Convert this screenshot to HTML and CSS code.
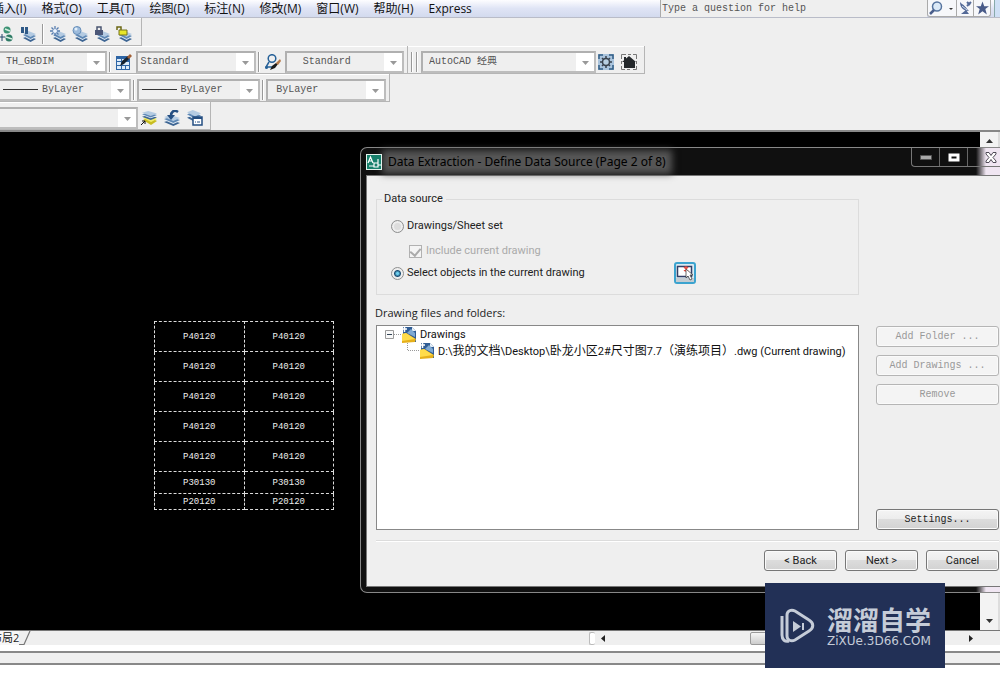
FILE: index.html
```html
<!DOCTYPE html>
<html lang="zh-CN">
<head>
<meta charset="utf-8">
<title>AutoCAD - Data Extraction</title>
<link rel="stylesheet" href="styles.css">
</head>
<body>
<svg class="defs" aria-hidden="true">
  <defs>
    <symbol id="layers" viewBox="0 0 12 11" preserveAspectRatio="none">
      <path d="M0 7l5-2 7 3-5 3z" fill="#3d6593"/><path d="M0 5l5-2 7 3-5 3z" fill="#e4edf6"/><path d="M0 4l5-2 7 3-5 3z" fill="#5e88b5"/><path d="M0 2l5-2 7 3-5 3z" fill="#b4cbe2"/>
    </symbol>
    <symbol id="arrow" viewBox="0 0 7 4"><path d="M0 0h7L3.500 4z" fill="#999"/></symbol>
    <symbol id="dwg" viewBox="0 0 16 16">
      <path d="M2 0h9l4 4v11H2z" fill="#2f5c94"/><path d="M11 0v4h4z" fill="#e7eff7"/><path d="M1 2h5M3.500 0v5" stroke="#fff" stroke-width="1.500"/><path d="M6 6l4-4 4 4v4z" fill="#7fa9d2"/><path d="M1 7l4-1 10 6-1 3-13 1z" fill="#e6b01a"/><path d="M1 7l4-1 9 6-13 2z" fill="#ffdc4a"/>
    </symbol>
  </defs>
</svg>
<div class="app">
  <header class="menubar">
    <nav class="menus">
      <button>插入(I)</button><button>格式(O)</button><button>工具(T)</button><button>绘图(D)</button><button>标注(N)</button><button>修改(M)</button><button>窗口(W)</button><button>帮助(H)</button><button>Express</button>
    </nav>
    <input class="help" type="text" placeholder="Type a question for help" aria-label="Type a question for help">
    <div class="infobar">
      <button class="search" aria-label="Search"><svg width="26" height="15" viewBox="0 0 26 15"><circle cx="8" cy="5.500" r="4.500" fill="#dbe9f7" stroke="#56749f" stroke-width="1.500"/><path d="M5 9l-4 4" stroke="#4a5e8c" stroke-width="2.500"/><path d="M20 7h4l-2 2z" fill="#333"/></svg></button>
      <button aria-label="Communication"><svg width="14" height="15" viewBox="0 0 14 15"><path d="M2 1c0 6 4 9 9 9zM3 13h8l-3-4z" fill="#536997"/><path d="M4 4l4 4M9 1l3 3M9 5l4-4" stroke="#536997" stroke-width="2"/><path d="M4 5l5 4" stroke="#cddbee"/></svg></button>
      <button aria-label="Favorites"><svg width="13" height="14" viewBox="0 0 12 12"><path d="M6 0l1.600 4.300H12L8.600 7l1.400 5-4-3-4 3 1.400-5L0 4.300h4.400z" fill="#485a88"/></svg></button>
    </div>
    <span class="edge"></span>
  </header>

  <section class="toolbars">
    <div class="row"><div class="bar layer-tools">
      <button aria-label="Layer match"><svg width="16" height="16" viewBox="0 0 16 16"><circle cx="9" cy="4" r="3.500" fill="#3c9274"/><circle cx="11" cy="12" r="3.500" fill="#2f7b66"/><path d="M7 3l5 2M8 11l6 2" stroke="#d5eee0" stroke-width="1.500"/><path d="M0 11h7M4 8v7" stroke="#24496b"/></svg></button>
      <button aria-label="Layer isolate"><svg width="16" height="16" viewBox="0 0 16 16"><use href="#layers" x="3" y="5" width="13" height="11"/><path d="M1 1h3v6H1zM5 1h3v7H5z" fill="#2e5987"/></svg></button>
      <i class="sep"></i>
      <button aria-label="Layer freeze"><svg width="16" height="16" viewBox="0 0 16 16"><use href="#layers" x="3" y="5" width="13" height="11"/><path d="M5 0v10M0 5h10M1.500 1.500l7 7M8.500 1.500l-7 7" stroke="#577daf" stroke-width="1.300"/><circle cx="5" cy="5" r="2" fill="#eef5ff"/></svg></button>
      <button aria-label="Layer off"><svg width="16" height="16" viewBox="0 0 16 16"><use href="#layers" x="3" y="5" width="13" height="11"/><circle cx="5" cy="4.500" r="4" fill="#9cbbdc" stroke="#668eb9"/><circle cx="4" cy="3" r="1.500" fill="#e3effa"/></svg></button>
      <button aria-label="Layer lock"><svg width="16" height="16" viewBox="0 0 16 16"><use href="#layers" x="3" y="5" width="13" height="11"/><path d="M3 5V1h4v4" fill="none" stroke="#4a5572" stroke-width="1.500"/><path d="M1 4h8v5H1z" fill="#4b5778"/></svg></button>
      <button aria-label="Layer unlock"><svg width="16" height="16" viewBox="0 0 16 16"><use href="#layers" x="3" y="5" width="13" height="11"/><path d="M1 4V1h4v4" fill="none" stroke="#6b6713" stroke-width="1.500"/><path d="M3 4h8v5H3z" fill="#e7e629" stroke="#77751d"/></svg></button>
    </div></div>

    <div class="row"><div class="bar styles-bar">
      <div class="combo w-dim"><select aria-label="Dimension style"><option>TH_GBDIM</option></select><svg width="18" height="18"><use href="#arrow" x="6" y="8" width="7" height="4"/></svg></div>
      <i class="sep"></i>
      <button aria-label="Table style"><svg width="16" height="16" viewBox="0 0 16 16"><path d="M0 2h14v14H0z" fill="#2e65a5"/><path d="M1 5h4v2H1zm5 0h4v2H6zM1 8h4v3H1zm5 0h7v3H6zM1 12h4v3H1zm5 0h3v3H6zm4 0h3v3h-3z" fill="#ddecfa"/><path d="M4 12l2-5 6-5 1 3-5 5z" fill="#17232f"/><path d="M11 3l3-3 2 2-3 3z" fill="#a15f35"/></svg></button>
      <div class="combo w-std"><select aria-label="Table style name"><option>Standard</option></select><svg width="18" height="18"><use href="#arrow" x="6" y="8" width="7" height="4"/></svg></div>
      <i class="sep"></i>
      <button aria-label="Multileader style"><svg width="16" height="16" viewBox="0 0 16 16"><circle cx="7" cy="4.500" r="3.800" fill="none" stroke="#266198" stroke-width="1.500"/><path d="M4 8l-3 5h6" fill="none" stroke="#266198" stroke-width="1.500"/><circle cx="1.500" cy="13.500" r="1.500" fill="#266198"/><path d="M5 16l2-4 4-3 2 1-3 4z" fill="#1a1a1a"/><path d="M11 9l4-4 1 2-3 4z" fill="#b77a49"/></svg></button>
      <div class="combo w-std indent"><select aria-label="Multileader style name"><option>Standard</option></select><svg width="18" height="18"><use href="#arrow" x="6" y="8" width="7" height="4"/></svg></div>
    </div><div class="bar workspace-bar">
      <i class="sep"></i><i class="sep"></i>
      <div class="combo w-space"><select aria-label="Workspace"><option>AutoCAD 经典</option></select><svg width="18" height="18"><use href="#arrow" x="6" y="8" width="7" height="4"/></svg></div>
      <button aria-label="Workspace settings"><svg width="16" height="16" viewBox="0 0 16 16"><path d="M0 0h16v16H0z" fill="#aac4dd"/><path d="M1 5V1h4M11 1h4v4M15 11v4h-4M5 15H1v-4" fill="none" stroke="#315c84" stroke-width="1.500"/><path d="M8 2v12M2 8h12M4 4l8 8M12 4l-8 8" stroke="#38414c" stroke-width="1.500"/><circle cx="8" cy="8" r="3.500" fill="#b8cfe1" stroke="#38414c" stroke-width="1.500"/></svg></button>
      <button class="home" aria-label="My workspace"><svg width="16" height="16" viewBox="0 0 16 16"><path d="M.5 5V.5H5M7 .5h3M12 .5h3.500V5M15.500 7v3M15.500 12v3.500H12M9 15.500H6M4 15.500H.5V12M.5 10V7" fill="none" stroke="#777"/><path d="M3 14V8H1l7-6 7 6h-1v6z" fill="#24282b"/><path d="M3 3h2v4H3z" fill="#24282b"/></svg></button>
    </div></div>

    <div class="row"><div class="bar props-bar">
      <div class="combo w-ltype"><span class="line"></span><select aria-label="Linetype"><option>ByLayer</option></select><svg width="18" height="18"><use href="#arrow" x="6" y="8" width="7" height="4"/></svg></div>
      <i class="sep"></i>
      <div class="combo w-lweight"><span class="line"></span><select aria-label="Lineweight"><option>ByLayer</option></select><svg width="18" height="18"><use href="#arrow" x="6" y="8" width="7" height="4"/></svg></div>
      <i class="sep"></i>
      <div class="combo w-plot"><select aria-label="Plot style"><option>ByLayer</option></select><svg width="18" height="18"><use href="#arrow" x="6" y="8" width="7" height="4"/></svg></div>
    </div></div>

    <div class="row"><div class="bar layers-bar">
      <div class="combo w-layer"><select aria-label="Layer"><option></option></select><svg width="18" height="18"><use href="#arrow" x="6" y="8" width="7" height="4"/></svg></div>
      <button aria-label="Make layer current"><svg width="16" height="16" viewBox="0 0 16 16"><path d="M2 10l6-3 8 4-6 4z" fill="#c8bd22"/><path d="M2 8l6-3 8 4-6 3z" fill="#f0ec69"/><use href="#layers" x="1" y="1" width="15" height="9"/><path d="M0 15l4-4M1 11h3v3" fill="none" stroke="#111"/></svg></button>
      <button aria-label="Layer previous"><svg width="16" height="16" viewBox="0 0 16 16"><use href="#layers" x="0" y="5" width="16" height="11"/><path d="M14 2C10-1 7 2 7 6" fill="none" stroke="#254f82" stroke-width="2.500"/><path d="M3 5h8l-4 5z" fill="#254f82"/></svg></button>
      <button aria-label="Layer states"><svg width="16" height="16" viewBox="0 0 16 16"><use href="#layers" x="0" y="0" width="14" height="12"/><path d="M6 7h9v8H6z" fill="#fff" stroke="#254f82" stroke-width="1.500"/><path d="M6 7h9v2H6z" fill="#254f82"/><path d="M8 12h1m1 0h3" stroke="#254f82"/></svg></button>
    </div></div>
  </section>

  <main class="workspace">
    <div class="canvas">
      <table class="schedule">
        <tr><td>P40120</td><td>P40120</td></tr>
        <tr><td>P40120</td><td>P40120</td></tr>
        <tr><td>P40120</td><td>P40120</td></tr>
        <tr><td>P40120</td><td>P40120</td></tr>
        <tr><td>P40120</td><td>P40120</td></tr>
        <tr class="mid"><td>P30130</td><td>P30130</td></tr>
        <tr class="low"><td>P20120</td><td>P20120</td></tr>
      </table>
    </div>
    <div class="vscroll">
      <button aria-label="Scroll up"><svg width="7" height="4"><path d="M0 4h7L3.500 0z" fill="#333"/></svg></button>
      <button aria-label="Scroll down"><svg width="7" height="4"><path d="M0 0h7L3.500 4z" fill="#333"/></svg></button>
    </div>
  </main>

  <footer class="bottom">
    <div class="tabs">
      <button class="tab">布局2</button>
      <svg class="slant" width="12" height="14" viewBox="0 0 12 14"><path d="M11 0L5 13.500H0" fill="none" stroke="#777" stroke-width="1.200"/></svg>
      <div class="hscroll">
        <i class="splitter"></i>
        <button aria-label="Scroll left"><svg width="4" height="7"><path d="M4 0v7L0 3.500z" fill="#222"/></svg></button>
        <i class="thumb"></i>
        <button aria-label="Scroll right"><svg width="4" height="7"><path d="M0 0v7l4-3.500z" fill="#222"/></svg></button>
      </div>
    </div>
    <div class="command"></div>
  </footer>

  <section class="dialog" role="dialog" aria-labelledby="dlg-title">
    <div class="titlebar">
      <svg width="16" height="16" viewBox="0 0 16 16"><path d="M0 0h16v16H0z" fill="#e3f2ec"/><path d="M1 1h14v14H1z" fill="#18806c"/><path d="M2 9l2.500-6L7 9M3 7h3M8 9h4v4H8zM12 5v6h3M3 12h5" fill="none" stroke="#fff" stroke-width="1.200"/></svg>
      <h1 id="dlg-title">Data Extraction - Define Data Source (Page 2 of 8)</h1>
      <div class="winctl">
        <button aria-label="Minimize"><svg width="12" height="5"><path d="M.5 .5h11v4H.5z" fill="#aaa" stroke="#555"/></svg></button>
        <button aria-label="Maximize"><svg width="12" height="9"><path d="M2 2h8v5H2z" fill="none" stroke="#fff" stroke-width="3"/></svg></button>
        <button class="close" aria-label="Close"><svg width="12" height="11" viewBox="0 0 12 11"><path d="M1 .5h3l2 3 2-3h3v1.500L8 5.500 11 9v1.500H8l-2-3-2 3H1V9l3-3.500L1 2z" fill="#fff" stroke="#4f4a56"/></svg></button>
      </div>
    </div>
    <form class="body">
      <div class="columns">
        <div class="left">
          <fieldset>
            <legend>Data source</legend>
            <div class="opt"><input type="radio" name="src" id="r1"><label for="r1">Drawings/Sheet set</label></div>
            <div class="opt sub"><input type="checkbox" id="c1" checked disabled><label for="c1">Include current drawing</label></div>
            <div class="opt last"><input type="radio" name="src" id="r2" checked><label for="r2">Select objects in the current drawing</label>
              <button type="button" class="pick" aria-label="Select objects"><svg width="18" height="18" viewBox="0 0 18 18"><path d="M0 14h18v4H0z" fill="#c4ccd2"/><path d="M1.500 2.500h14v10h-14z" fill="#fff" stroke="#333f66" stroke-width="1.500"/><path d="M8 3l4 4M12 3l-4 4M10 2v6" stroke="#e64a3d" stroke-width="1.200"/><path d="M10 5v9l2-2 2 4 2-1-2-4h3z" fill="#fff" stroke="#444" stroke-width=".8"/></svg></button></div>
          </fieldset>
          <h2>Drawing files and folders:</h2>
          <div class="tree">
            <div class="node"><svg width="16" height="16" viewBox="0 0 16 16"><path d="M.5 3.500h8v8h-8z" fill="#f8f8f8" stroke="#999"/><path d="M2 7.500h5" stroke="#345"/><path d="M9 7.500h7" stroke="#999" stroke-dasharray="1 1"/></svg><svg width="16" height="16"><use href="#dwg"/></svg><span>Drawings</span></div>
            <div class="node child"><svg width="12" height="16" viewBox="0 0 12 16"><path d="M.5 0v7.500H12" fill="none" stroke="#999" stroke-dasharray="1 1"/></svg><svg width="16" height="16"><use href="#dwg"/></svg><span>D:\<span class="han">我的文档</span>\Desktop\<span class="han">卧龙小区</span>2#<span class="han">尺寸图</span>7.7<span class="han">（演练项目）</span>.dwg (Current drawing)</span></div>
          </div>
        </div>
        <div class="side">
          <button type="button" class="btn mono" disabled>Add Folder ...</button>
          <button type="button" class="btn mono" disabled>Add Drawings ...</button>
          <button type="button" class="btn mono" disabled>Remove</button>
          <button type="button" class="btn mono settings">Settings...</button>
        </div>
      </div>
      <div class="actions">
        <button type="button" class="btn">&lt; Back</button>
        <button type="button" class="btn">Next &gt;</button>
        <button type="button" class="btn">Cancel</button>
      </div>
    </form>
  </section>

  <aside class="brand">
    <svg width="36" height="38" viewBox="0 0 36 38"><path d="M3 9v19c0 5 3 7 7 6" fill="none" stroke="#c5ccd8" stroke-width="3"/><path d="M8 8c0-4 4-6 8-4l14 9c5 3 5 8 0 11l-14 9c-4 2-8 0-8-4z" fill="none" stroke="#c5ccd8" stroke-width="3"/><path d="M14 14v11l8-5.500z" fill="#c5ccd8"/><path d="M24 16v7" stroke="#c5ccd8" stroke-width="2"/></svg>
    <div><strong>溜溜自学</strong><span>ZiXUe.3D66.COM</span></div>
  </aside>
</div>
</body>
</html>
```
FILE: styles.css
```css
* { box-sizing: border-box; }
body { margin: 0; font: 11px/16px "Open Sans", "Noto Sans CJK SC", sans-serif; color: #222; background: #fff; }
button, input, select { font: inherit; color: inherit; margin: 0; padding: 0; border: 0; background: none; }
button { display: flex; align-items: center; justify-content: center; flex: none; }
svg { display: block; flex: none; }
.defs { position: absolute; width: 0; height: 0; }
.app { position: relative; display: flex; flex-direction: column; min-height: 100vh; overflow: hidden; }

.menubar { display: flex; height: 18px; background: linear-gradient(#fdfdff, #dfe4f5 50%, #d3daee); border-bottom: 1px solid #b9bcc8; }
.menus { display: flex; flex: 1; gap: 15px; margin-left: -8px; font-size: 12px; color: #111; }
.menus button { white-space: nowrap; }
.help { width: 267px; padding-left: 1px; border-left: 1px solid #aaa; background: #efefef; font: 10px "Liberation Mono", monospace; }
.help::placeholder { color: #555; opacity: 1; }
.infobar { display: flex; border: 1px solid #aaa; border-top: 0; border-radius: 0 0 3px 3px; background: #f6f7fa; }
.infobar button { width: 17px; }
.infobar .search { width: 28px; }
.infobar button + button { border-left: 1px solid #aaa; }
.edge { width: 6px; margin-left: 3px; border-left: 1px solid #8aa; background: #cfe0f5; }

.toolbars { background: #efefef; border-bottom: 2px solid #888; }
.row { display: flex; height: 28px; }
.bar { display: flex; align-items: center; border: 1px solid #b5b5b5; border-width: 0 1px 1px 0; box-shadow: inset 0 1px #fff; padding: 4px 3px 0 0; }
.sep { flex: none; width: 2px; height: 20px; border-left: 1px solid #999; background: #fff; }
.combo { display: flex; height: 22px; border: 2px solid #bbb; border-color: #b0b0b0 #bdbdbd #bdbdbd #b0b0b0; background: #efefef; color: #555; font: 10px "Liberation Mono", "Noto Sans CJK SC", monospace; align-items: center; }
.combo select { flex: 1; min-width: 0; height: 18px; padding-left: 2px; appearance: none; }
.combo svg { background: #fff; }
.combo .line { flex: none; width: 35px; margin: 0 2px 0 3px; border-top: 1px solid #333; }
.layer-tools { gap: 6px; width: 142px; }
.layer-tools button { width: 16px; }
.layer-tools button:first-child { margin-left: -2px; }
.styles-bar { width: 408px; }
.styles-bar .sep { margin: 0 5px 0 2px; }
.styles-bar button { margin-right: 4px; }
.w-dim { width: 108px; border-left: 0; }
.w-dim select { padding-left: 6px; }
.w-std { width: 120px; }
.indent select { padding-left: 16px; }
.workspace-bar { width: 237px; }
.workspace-bar .sep { margin-left: 3px; }
.workspace-bar .combo { margin: 0 2px 0 3px; }
.workspace-bar .home { margin-left: 7px; }
.w-space { width: 175px; }
.w-space select { padding-left: 6px; }
.props-bar { width: 390px; }
.props-bar .sep { margin: 0 2px; }
.w-ltype { width: 132px; border-left: 0; }
.w-lweight { width: 125px; }
.w-plot { width: 121px; }
.w-plot select { padding-left: 8px; }
.layers-bar { width: 211px; gap: 7px; }
.w-layer { width: 138px; border-left: 0; margin-right: -4px; }

.workspace { display: flex; flex: 1; background: #000; }
.canvas { flex: 1; padding: 189px 0 0 154px; }
.schedule { width: 180px; border-collapse: collapse; table-layout: fixed; color: #eee; font: 9px/12px "Liberation Mono", monospace; text-align: center; }
.schedule td { height: 30px; padding: 0; border: 1px dashed #ddd; }
.schedule .mid td { height: 22px; }
.schedule .low td { height: 16px; }
.vscroll { display: flex; flex-direction: column; justify-content: space-between; width: 20px; border-right: 2px solid #ddd; background: #f3f3f3; }
.vscroll button { height: 18px; }

.bottom { background: #fff; padding-bottom: 21px; }
.tabs { display: flex; height: 17px; background: #efefef; border-top: 1px solid #777; border-bottom: 2px solid #fff; }
.tab { margin-left: -9px; background: #f7f7f7; }
.hscroll { display: flex; align-items: center; width: 411px; margin-left: auto; padding-right: 27px; }
.hscroll .splitter { width: 6px; height: 13px; border: 1px solid #bbb; border-right: 0; border-radius: 2px; background: #fff; margin-right: 6px; }
.hscroll .thumb { width: 100px; height: 13px; margin: 0 auto 0 145px; border: 1px solid #999; border-radius: 2px; background: linear-gradient(#f5f5f5, #ccc); }
.command { height: 14px; border: 2px solid #888; border-width: 2px 0; margin-top: 4px; background: #efefef; }

.dialog { position: absolute; left: 360px; right: 0; top: 147px; padding: 0 0 5px 5px; border: 1px solid #888; border-right: 0; border-radius: 7px 0 0 7px; background: linear-gradient(90deg, #101010 0 615px, #f0e6f2 625px); color: #222; font-family: Roboto, "Noto Sans CJK SC", sans-serif; }
.titlebar { display: flex; align-items: center; height: 27px; gap: 6px; }
.titlebar h1 { margin: 0; font: 12px/12px "Noto Sans", sans-serif; color: #000; background: #555; box-shadow: 0 0 7px 6px #555; white-space: nowrap; }
.titlebar > svg { z-index: 1; }
.winctl { display: flex; align-self: flex-start; height: 19px; margin-left: auto; border: 1px solid #777; border-width: 0 0 1px 1px; border-radius: 0 0 0 4px; }
.winctl button { width: 28px; border-right: 1px solid #666; }
.winctl .close { width: 32px; padding-left: 13px; border: 0; }
.body { padding: 16px 1px 15px 9px; border: 1px solid #777; border-right: 0; background: #efefef; }
.columns { display: flex; gap: 17px; }
.left { flex: 1; min-width: 0; }
fieldset { height: 103px; margin: 0; padding: 12px 0 0 14px; border: 1px solid #dcdcdc; }
legend { margin-left: -9px; padding: 0 3px 0 2px; line-height: 14px; }
.opt { display: flex; align-items: center; height: 16px; gap: 3px; margin-bottom: 9px; }
.opt input { appearance: none; width: 13px; height: 13px; border: 1px solid #8e8f8f; background: #f4f4f4; }
.opt input[type="radio"] { border-radius: 50%; box-shadow: inset 0 0 0 2px #eee; background: #ddd; }
.opt input[type="radio"]:checked { background: radial-gradient(circle, #6fd0ef 0 1px, #174a70 3px, #eee 5px); }
.opt input[type="checkbox"] { display: grid; place-items: center; border-color: #b1b1b1; }
.opt input[type="checkbox"]::before { content: ""; width: 5px; height: 8px; margin-bottom: 2px; border: solid #aaa; border-width: 0 2px 2px 0; transform: rotate(40deg); }
.sub { margin-left: 18px; margin-bottom: 6px; color: #aaa; }
.sub label { padding-left: 1px; }
.pick { width: 22px; height: 22px; margin-left: auto; margin-right: 162px; border: 2px solid #3ba3cf; border-radius: 3px; background: #dcebf3; }
h2 { margin: 10px 0 4px -1px; font: 11px/16px "Open Sans", sans-serif; }
.tree { height: 205px; padding: 1px 0 0 8px; border: 1px solid #888; background: #fff; }
.node { display: flex; height: 16px; align-items: center; gap: 3px; white-space: nowrap; color: #111; }
.node svg:first-child { margin-right: -3px; }
.child { padding-left: 22px; }
.han { font-size: 12px; }
.side { display: flex; flex-direction: column; gap: 8px; width: 123px; padding-top: 134px; }
.btn { height: 21px; border: 1px solid #777; border-radius: 3px; background: linear-gradient(#f4f4f4, #ececec 50%, #dcdcdc 50%, #d2d2d2); box-shadow: inset 0 0 0 1px #fafafa; }
.mono { font: 10px "Liberation Mono", monospace; }
.btn:disabled { border-color: #b5b5b5; background: #f4f4f4; color: #999; }
.settings { margin-top: auto; }
.actions { display: flex; justify-content: flex-end; gap: 8px; margin-top: 10px; padding-top: 9px; border-top: 1px solid #dcdcdc; box-shadow: inset 0 1px #fff; }
.actions .btn { width: 73px; }

.brand { position: absolute; right: 55px; bottom: 18px; display: flex; align-items: center; gap: 12px; width: 180px; height: 85px; padding-left: 14px; background: #223056; color: #c5ccd8; }
.brand strong { display: block; font: bold 26px/30px "Noto Sans CJK SC", sans-serif; }
.brand span { display: block; font: 12px/14px "DejaVu Sans", sans-serif; }
```
